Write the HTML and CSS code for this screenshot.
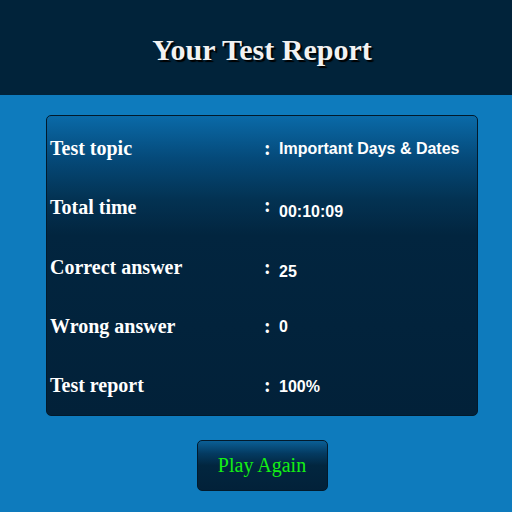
FILE: index.html
```html
<!DOCTYPE html>
<html>
<head>
<meta charset="utf-8">
<link rel="stylesheet" href="styles.css">
</head>
<body>
<header class="top">
  <h1 class="title">Your Test Report</h1>
</header>
<main class="wrap">
  <section class="card">
    <div class="row"><span class="label">Test topic</span><span class="colon">:</span><span class="value">Important Days &amp; Dates</span></div>
    <div class="row"><span class="label">Total time</span><span class="colon up">:</span><span class="value down">00:10:09</span></div>
    <div class="row"><span class="label">Correct answer</span><span class="colon">:</span><span class="value down2">25</span></div>
    <div class="row"><span class="label">Wrong answer</span><span class="colon">:</span><span class="value up2">0</span></div>
    <div class="row"><span class="label">Test report</span><span class="colon">:</span><span class="value down3">100%</span></div>
  </section>
  <button class="btn">Play Again</button>
</main>
</body>
</html>
```
FILE: styles.css
```css
html, body {
  margin: 0;
  padding: 0;
  height: 100%;
}
body {
  background: #0e7bbd;
  font-family: "Liberation Serif", "Times New Roman", serif;
  overflow: hidden;
}
.top {
  background: #01233a;
  height: 95px;
  display: flex;
  align-items: center;
  justify-content: center;
}
.title {
  margin: 5px 0 0;
  padding-left: 12px;
  font-size: 30px;
  font-weight: bold;
  color: #f2f2f2;
  text-shadow: 2px 2px 1px #000;
}
.wrap {
  padding: 20px 0 0 12px;
  display: flex;
  flex-direction: column;
  align-items: center;
}
.card {
  box-sizing: border-box;
  width: 432px;
  height: 301px;
  border: 1px solid #021a2c;
  border-radius: 5px;
  padding: 3px 0 0 3px;
  background: linear-gradient(to bottom, #0a6aa8 0%, #054a7a 14%, #033252 28%, #02253f 40%, #022139 100%);
  display: flex;
  flex-direction: column;
}
.row {
  height: 59.4px;
  display: flex;
  align-items: center;
}
.label {
  width: 214px;
  font-size: 20px;
  font-weight: bold;
  color: #fff;
}
.colon {
  width: 15px;
  font-size: 20px;
  font-weight: bold;
  color: #fff;
}
.value {
  font-family: "Liberation Sans", Arial, sans-serif;
  font-size: 16px;
  font-weight: bold;
  color: #fff;
}
.up { position: relative; top: -2px; }
.down { position: relative; top: 4px; }
.down2 { position: relative; top: 5px; }
.up2 { position: relative; top: 1px; }
.down3 { position: relative; top: 2px; }
.btn {
  margin-top: 24px;
  width: 131px;
  height: 51px;
  border: 1px solid #021a2c;
  border-radius: 5px;
  background: linear-gradient(to bottom, #0a5f96 0%, #043b62 25%, #02263f 50%, #022139 100%);
  color: #14f014;
  font-family: "Liberation Serif", "Times New Roman", serif;
  font-size: 20px;
  padding: 0;
}
```
